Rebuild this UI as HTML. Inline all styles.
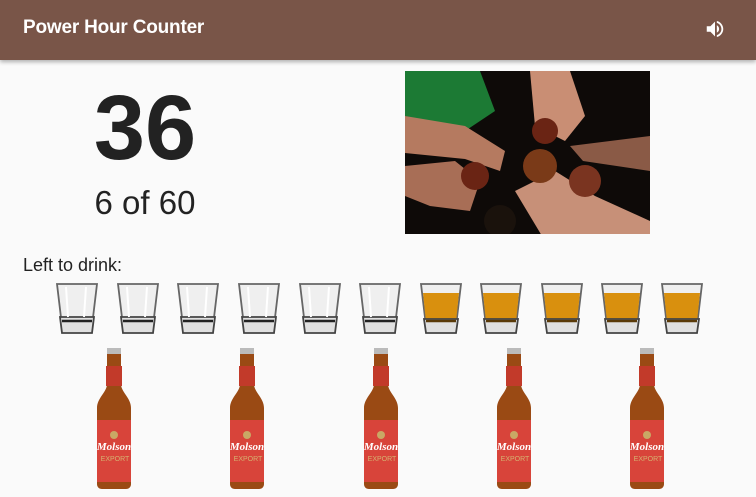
<!DOCTYPE html>
<html><head><style>
body{margin:0;width:756px;height:497px;background:#fafafa;font-family:"Liberation Sans",sans-serif;overflow:hidden;position:relative}
.hdr{position:absolute;left:0;top:0;width:756px;height:60px;background:#795548;box-shadow:0 2px 4px rgba(0,0,0,.3)}
.hdr span{position:absolute;left:23px;top:17px;color:#fff;font-size:19px;font-weight:bold;letter-spacing:-0.2px}
.big{position:absolute;left:0;width:290px;text-align:center;color:#222}
</style></head><body>
<div class="hdr"><span>Power Hour Counter</span>
<svg style="position:absolute;left:704px;top:18px" width="22" height="22" viewBox="0 0 24 24"><path fill="#fff" d="M3 9v6h4l5 5V4L7 9H3zm13.5 3c0-1.77-1.02-3.29-2.5-4.03v8.05c1.48-.73 2.5-2.25 2.5-4.02zM14 3.23v2.06c2.89.86 5 3.54 5 6.71s-2.11 5.85-5 6.71v2.06c4.01-.91 7-4.49 7-8.77s-2.99-7.86-7-8.77z"/></svg></div>
<div class="big" style="top:78px;font-size:92px;font-weight:bold;line-height:100px">36</div>
<div class="big" style="top:184px;font-size:33px;line-height:38px">6 of 60</div>
<svg style="position:absolute;left:405px;top:71px" width="245" height="163" viewBox="0 0 245 163">
<rect width="245" height="163" fill="#0e0a08"/>
<path d="M0 0h75l15 40-30 20L0 45z" fill="#1c7a34"/>
<path d="M0 45 60 55 100 80 95 100 60 88 0 82z" fill="#b57a60"/>
<path d="M0 95 50 90 75 110 65 140 25 135 0 125z" fill="#a86e56"/>
<path d="M125 0h40l15 45-20 25-30-15z" fill="#c98e74"/>
<path d="M110 120 140 170 245 163 245 150 190 125 150 100z" fill="#c79078"/>
<path d="M165 75 245 65 245 100 178 90z" fill="#8a5a46"/>
<circle cx="140" cy="60" r="13" fill="#6a2414"/>
<circle cx="135" cy="95" r="17" fill="#7a3a18"/>
<circle cx="70" cy="105" r="14" fill="#6a2414"/>
<circle cx="95" cy="150" r="16" fill="#1a120c"/>
<circle cx="180" cy="110" r="16" fill="#7a3420"/>
</svg>
<div style="position:absolute;left:23px;top:255px;font-size:18px;color:#222">Left to drink:</div>
<svg width="0" height="0" style="position:absolute"><defs>
<symbol id="eg" viewBox="0 0 42 51"><path d="M1 1h40l-5 42H6z" fill="#efefef" stroke="#666" stroke-width="1.8"/><path d="M4 34h34l-2 16H6z" fill="#e0e0e0" stroke="#444" stroke-width="1.8"/><path d="M6 38h30" stroke="#222" stroke-width="2.5"/><path d="M10 4l2 30M30 4l-2 30" stroke="#fff" stroke-width="2"/></symbol>
<symbol id="fg" viewBox="0 0 42 51"><path d="M1 1h40l-5 42H6z" fill="#efefef" stroke="#666" stroke-width="1.8"/><path d="M3 10h36l-3 29H6z" fill="#d9900e"/><path d="M4 36h34l-2 14H6z" fill="#e0e0e0" stroke="#444" stroke-width="1.8"/><path d="M6 38h30" stroke="#5a3a08" stroke-width="2.5"/></symbol>
<symbol id="bt" viewBox="0 0 34 141"><rect x="10" y="0" width="14" height="6" fill="#bbb"/><path d="M10 6h14v30c0 8 10 14 10 24v76c0 3-2 5-5 5H5c-3 0-5-2-5-5V60c0-10 10-16 10-24z" fill="#9a4a14"/><path d="M9 18h16v20H9z" fill="#c23a2a"/><path d="M0 72h34v62H0z" fill="#d8443a"/><text x="17" y="102" font-size="11" font-style="italic" font-weight="bold" fill="#fff" text-anchor="middle" font-family="Liberation Serif,serif">Molson</text><text x="18" y="113" font-size="7" fill="#d6b070" text-anchor="middle">EXPORT</text><circle cx="17" cy="87" r="4" fill="#c9a865"/></symbol>
</defs></svg>
<div style="position:absolute;left:56px;top:283px">
<svg width="660" height="52">
<use href="#eg" x="0" width="42" height="51"/><use href="#eg" x="61" width="42" height="51"/><use href="#eg" x="121" width="42" height="51"/><use href="#eg" x="182" width="42" height="51"/><use href="#eg" x="243" width="42" height="51"/><use href="#eg" x="303" width="42" height="51"/><use href="#fg" x="364" width="42" height="51"/><use href="#fg" x="424" width="42" height="51"/><use href="#fg" x="485" width="42" height="51"/><use href="#fg" x="545" width="42" height="51"/><use href="#fg" x="605" width="42" height="51"/>
</svg></div>
<svg style="position:absolute;left:0;top:348px" width="756" height="142">
<use href="#bt" x="97" width="34" height="141"/><use href="#bt" x="230" width="34" height="141"/><use href="#bt" x="364" width="34" height="141"/><use href="#bt" x="497" width="34" height="141"/><use href="#bt" x="630" width="34" height="141"/>
</svg>
</body></html>
